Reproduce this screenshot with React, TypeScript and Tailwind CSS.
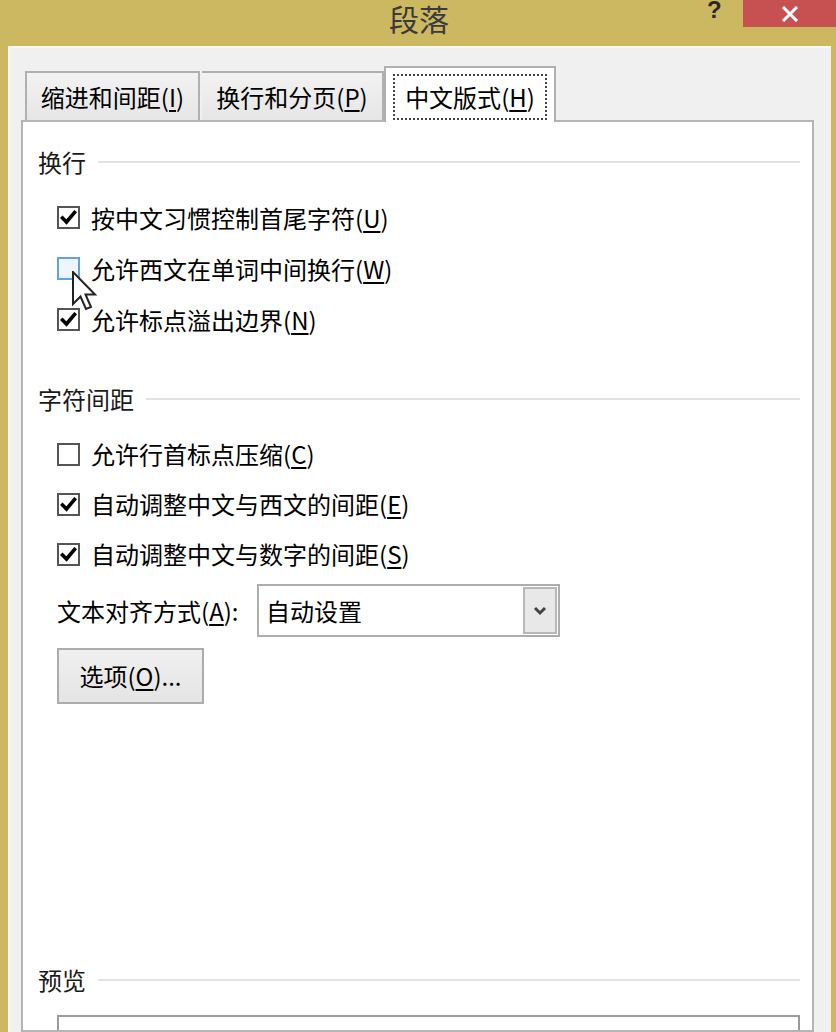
const FONT = { fontFamily: '"Microsoft YaHei", "Noto Sans CJK SC", "Noto Sans", sans-serif' };

function Key({ k }: { k: string }) {
  return (
    <>
      (<span className="underline underline-offset-[3px] decoration-[1.5px]">{k}</span>)
    </>
  );
}

function CheckBox({ checked, hover }: { checked?: boolean; hover?: boolean }) {
  return (
    <div
      className={
        'w-[23px] h-[23px] border-2 flex items-center justify-center shrink-0 ' +
        (hover ? 'border-[#5ea2e6] bg-[#eef5fd]' : 'border-[#555555] bg-white')
      }
    >
      {checked && (
        <svg width="17" height="15" viewBox="0 0 17 15">
          <path d="M2.5 8 L6.5 12 L14.5 2.5" fill="none" stroke="#000" strokeWidth="3.6" strokeLinecap="square" />
        </svg>
      )}
    </div>
  );
}

function Option({ label, k, checked, hover }: { label: string; k: string; checked?: boolean; hover?: boolean }) {
  return (
    <div className="h-[51px] flex items-center pl-[19px] gap-[11px]">
      <CheckBox checked={checked} hover={hover} />
      <span className="text-[24px] leading-none text-black">
        {label}
        <Key k={k} />
      </span>
    </div>
  );
}

function Heading({ title }: { title: string }) {
  return (
    <div className="h-[28px] flex items-center gap-[12px]">
      <span className="text-[24px] leading-none text-[#1a1a1a]">{title}</span>
      <div className="flex-1 h-[2px] bg-[#e3e3e3]" />
    </div>
  );
}

export default function App() {
  return (
    <div className="w-[836px] h-[1032px] bg-[#cdb862] flex flex-col overflow-hidden relative" style={FONT}>
      {/* Title bar */}
      <div className="h-[46px] shrink-0 relative">
        <div className="h-[36px] flex items-center justify-center pl-[2px]">
          <span className="text-[30px] leading-[36px] text-[#3b3b3b]">段落</span>
        </div>
        <span className="absolute left-[707px] top-0 text-[24px] font-bold text-[#2b2b2b] leading-[20px]" style={{ fontFamily: '"Liberation Sans", sans-serif' }}>?</span>
        <div className="absolute right-0 top-0 w-[93px] h-[27px] bg-[#c75050] flex items-center justify-center">
          <svg width="18" height="16" viewBox="0 0 18 16">
            <path d="M2 1 L16 15 M16 1 L2 15" stroke="#fff" strokeWidth="3" />
          </svg>
        </div>
      </div>

      {/* Dialog body */}
      <div className="flex-1 ml-[8px] mr-[5px] bg-[#f0f0f0] border-l-2 border-t-2 border-[#f7f7f7] pl-[11px] pr-[17px] pt-[18px] flex flex-col">
        {/* Tabs */}
        <div className="h-[54px] flex items-end pl-[4px] relative z-10">
          <div className="w-[175px] h-[49px] border-2 border-b-0 border-[#b0b0b0] bg-gradient-to-b from-[#f2f2f2] to-[#e6e6e6] flex items-center justify-center text-[24px] leading-none text-black">
            缩进和间距<Key k="I" />
          </div>
          <div className="w-[182px] h-[49px] ml-[2px] border-2 border-b-0 border-l-0 border-[#b0b0b0] bg-gradient-to-b from-[#f2f2f2] to-[#e6e6e6] flex items-center justify-center text-[24px] leading-none text-black">
            换行和分页<Key k="P" />
          </div>
          <div className="w-[172px] h-[56px] -mb-[2px] border-2 border-b-0 border-[#b0b0b0] bg-white flex items-center justify-center px-[7px] pt-[6px] pb-[2px]">
            <div className="w-full h-full border-2 border-dotted border-[#444] flex items-center justify-center text-[24px] leading-none text-black">
              中文版式<Key k="H" />
            </div>
          </div>
        </div>

        {/* Tab panel */}
        <div className="flex-1 border-2 border-[#b4b4b4] bg-white pl-[15px] pr-[12px] pt-[26px] flex flex-col">
          <Heading title="换行" />
          <div className="mt-[16px]">
            <Option label="按中文习惯控制首尾字符" k="U" checked />
            <Option label="允许西文在单词中间换行" k="W" hover />
            <Option label="允许标点溢出边界" k="N" checked />
          </div>

          <div className="mt-[40px]">
            <Heading title="字符间距" />
          </div>
          <div className="mt-[16px]">
            <div className="h-[50px] flex items-center pl-[19px] gap-[11px]">
              <CheckBox />
              <span className="text-[24px] leading-none text-black">允许行首标点压缩<Key k="C" /></span>
            </div>
            <div className="h-[50px] flex items-center pl-[19px] gap-[11px]">
              <CheckBox checked />
              <span className="text-[24px] leading-none text-black">自动调整中文与西文的间距<Key k="E" /></span>
            </div>
            <div className="h-[50px] flex items-center pl-[19px] gap-[11px]">
              <CheckBox checked />
              <span className="text-[24px] leading-none text-black">自动调整中文与数字的间距<Key k="S" /></span>
            </div>
          </div>

          {/* Alignment select */}
          <div className="mt-[5px] flex items-center pl-[19px]">
            <span className="w-[200px] text-[24px] leading-none text-black">文本对齐方式<Key k="A" />:</span>
            <div className="w-[303px] h-[53px] border-2 border-[#adadad] bg-white flex">
              <span className="flex-1 flex items-center pl-[7px] text-[24px] leading-none text-black">自动设置</span>
              <div className="w-[34px] m-[1px] border-2 border-[#b8b8b8] bg-[#e8e8e8] flex items-center justify-center">
                <svg width="14" height="10" viewBox="0 0 14 10">
                  <path d="M2 2 L7 7 L12 2" fill="none" stroke="#444" strokeWidth="3" />
                </svg>
              </div>
            </div>
          </div>

          <div className="mt-[11px] pl-[19px]">
            <button className="w-[147px] h-[56px] border-2 border-[#acacac] bg-gradient-to-b from-[#f0f0f0] to-[#e4e4e4] flex items-center justify-center text-[24px] leading-none text-black">
              选项<Key k="O" />...
            </button>
          </div>

          {/* Preview */}
          <div className="mt-[262px]">
            <Heading title="预览" />
          </div>
          <div className="mt-[21px] ml-[19px] flex-1 border-2 border-b-0 border-[#9a9a9a] bg-white" />
        </div>
      </div>

      {/* Mouse cursor */}
      <svg className="absolute left-[72px] top-[271px]" width="26" height="42" viewBox="0 0 26 42">
        <path d="M1 1 L1 33 L8.5 25.5 L14 38 L19 36 L13.5 23.5 L23 23.5 Z" fill="#fff" stroke="#222" strokeWidth="2" strokeLinejoin="miter" />
      </svg>
    </div>
  );
}
